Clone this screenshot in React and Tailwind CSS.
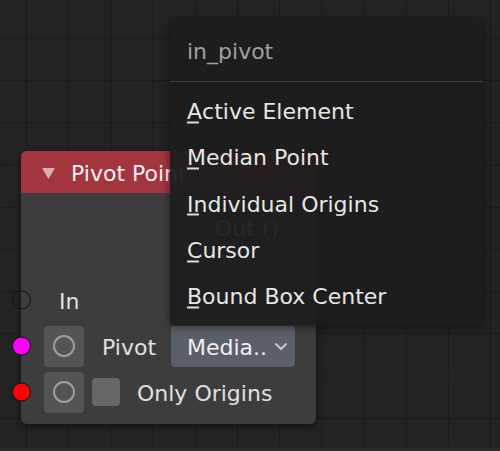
import React from 'react';

const items = ['Active Element', 'Median Point', 'Individual Origins', 'Cursor', 'Bound Box Center'];

// dejavu sits a bit high in a leading-none box, nudge glyphs down
const nudge = 'translate-y-[1.5px]';

// first letter gets a short fixed-width underline, the way blender marks accelerators
const MenuItem = ({ label }) => (
  <div className="h-[46.3px] flex items-center pl-[17px] text-[#e6e6e6] leading-none">
    <span className={`${nudge} inline-block`}>
      <span className="relative">
        {label[0]}
        <span className="absolute left-0 top-[22.5px] w-[12px] h-[2px] bg-[#dcdcdc]" />
      </span>
      {label.slice(1)}
    </span>
  </div>
);

const Socket = ({ color, side = 'left' }) => (
  <span
    className={`absolute top-1/2 -translate-y-1/2 w-[19px] h-[19px] rounded-full border border-[#121212] ${
      side === 'left' ? 'left-[-9.5px]' : 'right-[-9.5px]'
    } ${color}`}
  />
);

const RingButton = () => (
  <div className="w-[40px] h-[41px] rounded-[4px] bg-[#545454] flex items-center justify-center shrink-0">
    <span className="w-[22px] h-[22px] rounded-full border-2 border-[#9e9e9e]" />
  </div>
);

const PivotNode = () => (
  <div className="absolute left-[21px] top-[151px] w-[295px] h-[273px] rounded-[6px] bg-[#3d3d3d] shadow-[0_2px_6px_rgba(0,0,0,0.55)]">
    <div className="h-[42px] rounded-t-[6px] bg-[#a3353f] flex items-center pl-[21px] gap-[16px]">
      <svg width="13" height="11" viewBox="0 0 13 11" className="translate-y-[1px]">
        <polygon points="0,0 13,0 6.5,11" fill="rgba(255,255,255,0.6)" />
      </svg>
      <span className={`${nudge} text-[#f2f2f2] leading-none`}>Pivot Point</span>
    </div>

    <div className="pt-[11px]">
      <div className="relative h-[46px] flex items-center justify-end pr-[37px] text-[#e0e0e0] leading-none">
        <span className={nudge}>Out ()</span>
        <Socket color="bg-transparent" side="right" />
      </div>

      <div className="relative mt-[27px] h-[46px] flex items-center pl-[38px] text-[#e0e0e0] leading-none">
        <span className={nudge}>In</span>
        <Socket color="bg-transparent" />
      </div>

      <div className="relative h-[46px] flex items-center pl-[23px] pr-[21px]">
        <Socket color="bg-[#ff00ff]" />
        <RingButton />
        <span className={`${nudge} ml-[18px] flex-1 text-[#e0e0e0] leading-none`}>Pivot</span>
        <div className="w-[124px] h-[41px] rounded-[4px] bg-[#5b5f68] flex items-center pl-[16px] pr-[7px]">
          <span className={`${nudge} flex-1 text-[#f0f0f0] leading-none`}>Media..</span>
          <svg width="14" height="9" viewBox="0 0 14 9">
            <polyline points="1.5,1.5 7,7 12.5,1.5" fill="none" stroke="#c4c6cc" strokeWidth="2" />
          </svg>
        </div>
      </div>

      <div className="relative h-[46px] flex items-center pl-[23px]">
        <Socket color="bg-[#ff0000]" />
        <RingButton />
        <span className="ml-[8px] w-[28px] h-[28px] rounded-[4px] bg-[#666666]" />
        <span className={`${nudge} ml-[17px] text-[#e0e0e0] leading-none`}>Only Origins</span>
      </div>
    </div>
  </div>
);

const PivotMenu = () => (
  <div className="absolute left-[170px] top-[18px] w-[313px] h-[307px] rounded-[4px] bg-[rgba(30,30,30,0.95)] shadow-[0_2px_8px_rgba(0,0,0,0.5)]">
    <div className="h-[63px] flex items-center pl-[17px] text-[#a0a0a0] leading-none">
      <span className={nudge}>in_pivot</span>
    </div>
    <div className="h-px bg-[#3d3d3d]" />
    <div className="pt-[5px]">
      {items.map((label) => (
        <MenuItem key={label} label={label} />
      ))}
    </div>
  </div>
);

export default function App() {
  return (
    <div className="w-[500px] h-[451px] flex flex-col overflow-hidden font-['DejaVu_Sans',sans-serif] text-[22px]">
      <div className="relative flex-1 bg-[#232323] bg-[linear-gradient(to_right,#1a1a1a_1px,transparent_1px),linear-gradient(to_bottom,#1a1a1a_1px,transparent_1px)] bg-[size:42.2px_42.2px] bg-[position:26px_38px]">
        <PivotNode />
        <PivotMenu />
      </div>
      <div className="h-[4px] bg-[#2c2c2c] border-t border-[#262626]" />
    </div>
  );
}
